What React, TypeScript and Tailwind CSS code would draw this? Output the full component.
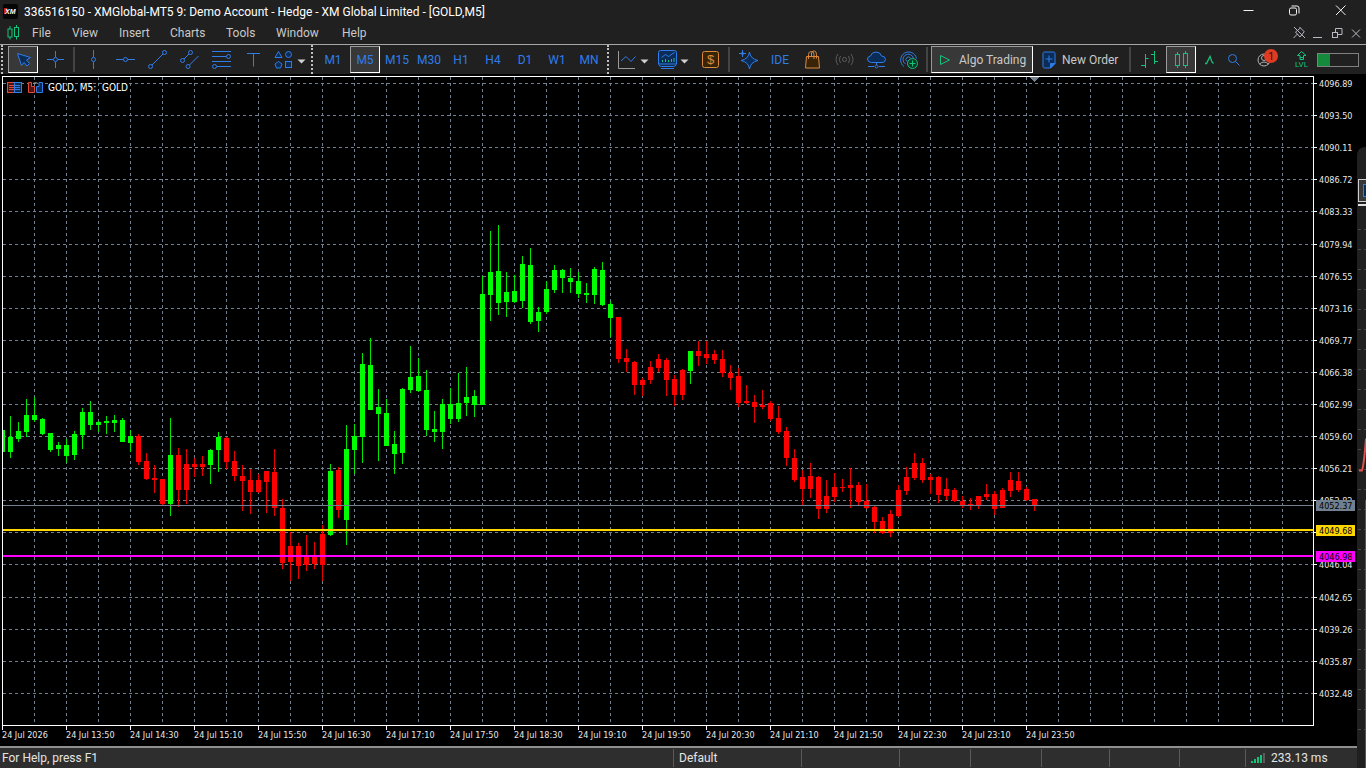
import type { ReactNode } from 'react'

type Candle = [high: number, top: number, bottom: number, low: number, up: 0 | 1]

// screen rows of every M5 candle, 8px apart: wick top, body top, body bottom, wick bottom, colour
const CANDLES: Candle[] = [
  [430, 430, 452, 452, 1], [416, 437, 452, 458, 1], [422, 431, 439, 442, 1], [399, 415, 432, 437, 1], [397, 415, 420, 422, 1],
  [418, 419, 434, 435, 1], [433, 433, 450, 452, 1], [442, 445, 449, 456, 1], [439, 445, 456, 463, 1], [431, 434, 455, 460, 1],
  [408, 412, 435, 449, 1], [401, 412, 425, 430, 1], [421, 422, 425, 432, 1], [416, 421, 423, 434, 1], [415, 420, 423, 432, 1],
  [418, 420, 442, 442, 1], [430, 436, 443, 452, 1], [434, 436, 462, 465, 0], [453, 461, 479, 480, 0], [465, 478, 480, 493, 0],
  [479, 479, 504, 505, 0], [418, 455, 504, 516, 1], [448, 455, 490, 507, 0], [449, 464, 490, 504, 0], [458, 464, 467, 477, 0],
  [456, 464, 467, 476, 0], [449, 450, 465, 484, 1], [432, 437, 450, 472, 1], [437, 438, 462, 469, 0], [451, 461, 476, 481, 0],
  [465, 476, 481, 511, 0], [469, 480, 492, 514, 0], [474, 480, 492, 493, 0], [471, 471, 482, 513, 0], [449, 472, 508, 516, 0],
  [499, 508, 563, 569, 0], [532, 546, 562, 581, 0], [543, 546, 566, 579, 0], [535, 556, 565, 571, 0], [542, 556, 564, 569, 0],
  [525, 534, 565, 581, 0], [464, 471, 535, 536, 1], [467, 470, 510, 518, 0], [425, 449, 520, 545, 1], [424, 436, 450, 474, 1],
  [353, 364, 437, 463, 1], [338, 365, 410, 410, 1], [389, 407, 414, 461, 1], [399, 413, 446, 446, 1], [431, 444, 454, 474, 1],
  [388, 389, 453, 464, 1], [346, 377, 390, 393, 1], [358, 376, 391, 392, 1], [370, 390, 430, 436, 1], [411, 429, 432, 442, 1],
  [399, 404, 432, 449, 1], [388, 404, 419, 424, 1], [373, 403, 419, 422, 1], [367, 397, 403, 416, 1], [390, 396, 405, 417, 1],
  [276, 294, 405, 405, 1], [231, 272, 295, 321, 1], [225, 271, 303, 315, 1], [272, 292, 302, 317, 1], [275, 291, 302, 303, 1],
  [256, 264, 301, 308, 1], [248, 265, 322, 324, 1], [307, 312, 321, 332, 1], [281, 289, 312, 314, 1], [265, 270, 290, 293, 1],
  [269, 270, 278, 293, 1], [268, 278, 282, 293, 1], [272, 281, 294, 298, 1], [283, 293, 295, 303, 1], [267, 269, 295, 304, 1],
  [262, 270, 305, 306, 1], [301, 304, 318, 337, 1], [317, 317, 359, 363, 0], [349, 358, 362, 372, 0], [361, 362, 385, 395, 0],
  [378, 380, 385, 396, 0], [361, 367, 380, 384, 0], [354, 359, 368, 372, 0], [358, 360, 380, 396, 0], [375, 379, 395, 406, 0],
  [369, 370, 395, 400, 0], [351, 351, 371, 384, 1], [341, 351, 356, 366, 0], [341, 354, 358, 364, 0], [350, 354, 360, 364, 0],
  [350, 359, 373, 377, 0], [365, 373, 378, 390, 0], [368, 376, 403, 407, 0], [385, 401, 403, 404, 0], [395, 402, 407, 423, 0],
  [390, 405, 407, 409, 0], [401, 403, 419, 421, 0], [406, 418, 432, 434, 0], [427, 431, 458, 466, 0], [449, 458, 480, 482, 0],
  [470, 477, 489, 506, 0], [463, 476, 489, 498, 0], [476, 477, 509, 519, 0], [480, 496, 509, 513, 0], [473, 487, 497, 502, 0],
  [479, 487, 488, 492, 0], [468, 485, 488, 508, 0], [482, 485, 502, 506, 0], [484, 501, 508, 509, 0], [506, 507, 522, 533, 0],
  [517, 521, 533, 534, 0], [510, 514, 533, 537, 0], [485, 490, 516, 517, 0], [467, 477, 491, 495, 0], [453, 463, 478, 480, 0],
  [458, 463, 480, 483, 0], [474, 477, 480, 494, 0], [476, 477, 495, 503, 0], [478, 489, 496, 500, 0], [488, 490, 501, 502, 0],
  [496, 501, 505, 508, 0], [498, 504, 506, 510, 0], [496, 496, 506, 509, 0], [484, 494, 497, 500, 0], [491, 494, 509, 515, 0],
  [488, 490, 508, 508, 0], [472, 480, 491, 497, 0], [472, 481, 490, 492, 0], [487, 489, 500, 501, 0], [499, 499, 506, 511, 0],
]

const TOP = 77

const PRICES: [string, number][] = [
  ['4096.89', 83], ['4093.50', 115], ['4090.11', 147], ['4086.72', 179], ['4083.33', 211],
  ['4079.94', 244], ['4076.55', 276], ['4073.16', 308], ['4069.77', 340], ['4066.38', 372],
  ['4062.99', 404], ['4059.60', 436], ['4056.21', 468], ['4052.82', 500], ['4049.43', 532],
  ['4046.04', 564], ['4042.65', 597], ['4039.26', 629], ['4035.87', 661], ['4032.48', 693],
]

const TAGS = [
  { price: '4052.37', y: 505, fill: '#708090' },
  { price: '4049.68', y: 530, fill: '#ffd700' },
  { price: '4046.98', y: 556, fill: '#ff00ff' },
]

const TIMES = [
  '24 Jul 2026', '24 Jul 13:50', '24 Jul 14:30', '24 Jul 15:10', '24 Jul 15:50', '24 Jul 16:30',
  '24 Jul 17:10', '24 Jul 17:50', '24 Jul 18:30', '24 Jul 19:10', '24 Jul 19:50', '24 Jul 20:30',
  '24 Jul 21:10', '24 Jul 21:50', '24 Jul 22:30', '24 Jul 23:10', '24 Jul 23:50',
]

const GRID_COLUMNS = Array.from({ length: 40 }, (_, i) => 31 + i * 32)

const CHART_FONT = "font-['DejaVu_Sans_Condensed','DejaVu_Sans',sans-serif] text-[9px]"

const BLUE = '#2f7de9'
const NAVY = '#0a2c57'
const GREEN = '#14c27c'
const ORANGE = '#d98a3d'

export default function App() {
  return (
    <div className="h-screen flex flex-col overflow-hidden bg-black font-['Roboto','Open_Sans',sans-serif] text-[12px] text-[#e4e4e4]">
      <TitleBar />
      <MenuBar />
      <Toolbar />
      <div className="flex-1 min-h-0 flex">
        <main className="flex-1 min-w-0 flex flex-col">
          <Chart />
          <StatusBar />
        </main>
        <SidePanel />
      </div>
    </div>
  )
}

function TitleBar() {
  return (
    <header className="h-[23px] shrink-0 bg-[#202020] flex items-center pl-[3px] pr-[17px]">
      <svg width="15" height="15" viewBox="0 0 15 15" aria-hidden="true">
        <rect width="15" height="15" rx="2" fill="#050505" />
        <path d="M1 4h3l1 2-3 4H1z" fill="#c8201c" />
        <text x="2" y="10" fill="#fff" fontSize="7" fontWeight="700" fontStyle="italic" fontFamily="Liberation Sans, sans-serif">XM</text>
      </svg>
      <h1 className="pl-1.5 text-white whitespace-nowrap">
        336516150 - XMGlobal-MT5 9: Demo Account - Hedge - XM Global Limited - [GOLD,M5]
      </h1>
      <div className="ml-auto flex">
        <WindowButton label="Minimize">
          <path d="M3.500 7.500h10" />
        </WindowButton>
        <span className="w-[29px]" />
        <WindowButton label="Restore">
          <rect x="3.500" y="5" width="7" height="7" rx="1.500" />
          <path d="M5.500 3h5.500a2 2 0 0 1 2 2v5.500" />
        </WindowButton>
        <span className="w-[29px]" />
        <WindowButton label="Close">
          <path d="M4 2.500l9.500 9.500M13.500 2.500l-9.500 9.500" />
        </WindowButton>
      </div>
    </header>
  )
}

function WindowButton({ label, children }: { label: string; children: ReactNode }) {
  return (
    <button type="button" aria-label={label} className="w-[17px] h-[17px]">
      <svg width="17" height="17" viewBox="0 0 17 17" fill="none" stroke="#f2f2f2">
        {children}
      </svg>
    </button>
  )
}

const MENU = [
  { label: 'File', className: 'w-10' },
  { label: 'View', className: 'w-[47px]' },
  { label: 'Insert', className: 'w-[51px]' },
  { label: 'Charts', className: 'w-14' },
  { label: 'Tools', className: 'w-[50px]' },
  { label: 'Window', className: 'w-[66px]' },
  { label: 'Help', className: 'w-10' },
]

function MenuBar() {
  return (
    <div className="h-[21px] shrink-0 bg-[#202020] flex items-center pl-1.5 pr-[3px] pb-0.5">
      <svg width="14" height="17" viewBox="0 0 14 17" fill="none" stroke={GREEN} aria-hidden="true">
        <path d="M4 2v3M4 13v2.500M10.500 1v2.500M10.500 12.500v3" />
        <rect x="2" y="5" width="4" height="8" />
        <rect x="8.500" y="3.500" width="4" height="9" />
      </svg>
      <nav className="flex pl-3 text-[#c9c9c9]">
        {MENU.map((item) => (
          <button key={item.label} type="button" className={`text-left ${item.className}`}>
            {item.label}
          </button>
        ))}
      </nav>
      <div className="ml-auto flex gap-[5px] text-[#b9b9c4]">
        <button type="button" aria-label="Unpin">
          <svg width="14" height="17" viewBox="0 0 14 17" fill="none" stroke="currentColor">
            <path d="M2 3l11 11M1.500 14l4-4M7.500 3l5 5M8.500 4l-5 4 4.500 5 4-5" />
          </svg>
        </button>
        <button type="button" aria-label="Minimize chart">
          <svg width="14" height="17" viewBox="0 0 14 17" fill="none" stroke="currentColor">
            <path d="M2 13.500h9" />
          </svg>
        </button>
        <button type="button" aria-label="Restore chart">
          <svg width="14" height="17" viewBox="0 0 14 17" fill="none" stroke="currentColor">
            <rect x="2.500" y="8.500" width="5" height="5" />
            <path d="M5.500 8V4.500h6.500v6h-4" />
          </svg>
        </button>
        <button type="button" aria-label="Close chart">
          <svg width="14" height="17" viewBox="0 0 14 17" fill="none" stroke="currentColor">
            <path d="M3 5.500l8 8M11 5.500l-8 8" />
          </svg>
        </button>
      </div>
    </div>
  )
}

function Icon({ label, children, className = 'w-8' }: { label: string; children: ReactNode; className?: string }) {
  return (
    <button type="button" aria-label={label} className={`h-[27px] shrink-0 flex justify-center ${className}`}>
      <svg width="32" height="27" viewBox="0 0 32 27" fill="none" stroke={BLUE} className="shrink-0">
        {children}
      </svg>
    </button>
  )
}

function MenuIcon({ label, children }: { label: string; children: ReactNode }) {
  return (
    <button type="button" aria-label={label} className="w-10 h-[27px] shrink-0">
      <svg width="40" height="27" viewBox="0 0 40 27" fill="none" stroke={BLUE}>
        {children}
        <path d="M28.500 13.500h8l-4 4z" fill="#d0d0d0" stroke="none" />
      </svg>
    </button>
  )
}

function Pressed({ label, children }: { label: string; children: ReactNode }) {
  return (
    <button
      type="button"
      aria-label={label}
      aria-pressed="true"
      className="w-[30px] h-[27px] mx-px shrink-0 flex items-center justify-center bg-[#383838] border border-[#9a9a9a] border-r-white border-b-white text-[#2f7de9]"
    >
      {children}
    </button>
  )
}

function Divider() {
  return <span className="w-0.5 h-[25px] mx-0.5 shrink-0 bg-[#444444]" />
}

function Grip({ className }: { className: string }) {
  return <span className={`h-[29px] shrink-0 border-l-2 border-dotted border-[#c0c0c0] ${className}`} />
}

const PERIODS = ['M1', 'M5', 'M15', 'M30', 'H1', 'H4', 'D1', 'W1', 'MN']

function Toolbar() {
  return (
    <div className="h-[30px] shrink-0 bg-[#202020] border-t border-[#a6a6a6] flex items-center">
      <Grip className="ml-px w-1.5" />
      <Pressed label="Cursor">
        <svg width="28" height="25" viewBox="2 1 28 25" fill={NAVY} stroke={BLUE}>
          <path d="M10.500 7.500l13 4-4 2.500 3 3.500-2.500 2.500-3-3.500-2.500 3z" />
        </svg>
      </Pressed>
      <Icon label="Crosshair">
        <path d="M8 13.500h6M19 13.500h6M16.500 5v6M16.500 16v6" />
        <circle cx="16.500" cy="13.500" r="2" />
      </Icon>
      <Divider />
      <Icon label="Vertical line">
        <path d="M16.500 4v7M16.500 16v7" />
        <circle cx="16.500" cy="13.500" r="2" />
      </Icon>
      <Icon label="Horizontal line">
        <path d="M7 13.500h7M19 13.500h7" />
        <circle cx="16.500" cy="13.500" r="2" />
      </Icon>
      <Icon label="Trendline">
        <path d="M11 19L22 8" />
        <circle cx="9.500" cy="20.500" r="2" />
        <circle cx="23.500" cy="6.500" r="2" />
      </Icon>
      <Icon label="Equidistant channel">
        <path d="M11 13l5-5M16.500 19l9-9" />
        <circle cx="9.500" cy="14.500" r="2" />
        <circle cx="17.500" cy="6.500" r="2" />
        <circle cx="15" cy="20.500" r="2" />
      </Icon>
      <Icon label="Fibonacci retracement">
        <path d="M7 5.500h19M7 10.500h14M7 15.500h19M12 20.500h14" />
        <circle cx="23.500" cy="10.500" r="2" />
        <circle cx="9.500" cy="20.500" r="2" />
      </Icon>
      <Icon label="Text">
        <path d="M10 7.500h13M16.500 7.500v13" />
      </Icon>
      <MenuIcon label="Shapes">
        <path d="M9.500 5.500l-3.500 6h7zM9.500 15.500l3.500 2.500-1.500 4h-4L6 18z" fill={NAVY} />
        <circle cx="19.500" cy="8.500" r="3" fill={NAVY} />
        <rect x="16.500" y="15.500" width="6" height="6" fill={NAVY} />
      </MenuIcon>
      <Grip className="ml-0.5 w-1.5" />
      {PERIODS.map((period) =>
        period === 'M5' ? (
          <Pressed key={period} label={period}>
            {period}
          </Pressed>
        ) : (
          <button key={period} type="button" className="w-8 h-[27px] shrink-0 text-[#2f7de9]">
            {period}
          </button>
        ),
      )}
      <Grip className="ml-0.5 w-[5px]" />
      <MenuIcon label="Line chart">
        <path d="M6.500 5v17.500H23" stroke="#9a9a9a" />
        <path d="M9 15l5-4.500 5 5 4.500-5" />
      </MenuIcon>
      <MenuIcon label="Templates">
        <path d="M8.500 4.500h14a2 2 0 0 1 2 2v11.500h-18V6.500a2 2 0 0 1 2-2zM6.500 18.500q1 2 3 2h12q2 0 3-2M9 22.500h13" fill={NAVY} />
        <path d="M9.500 11.500l4-3 3 2 6-4" />
        <path d="M10.500 14v2M13.500 13v3M16.500 14v2M19.500 13v3M22 12v4" stroke={GREEN} />
      </MenuIcon>
      <button type="button" aria-label="Trade" className="w-[34px] h-[27px] pl-0.5 shrink-0">
        <svg width="32" height="27" viewBox="0 0 32 27">
          <rect x="8.500" y="5.500" width="16" height="16" rx="2" fill="#3a2408" stroke={ORANGE} />
          <text x="16.500" y="18" textAnchor="middle" fill={ORANGE} fontSize="13" fontFamily="Liberation Sans, sans-serif">$</text>
        </svg>
      </button>
      <Divider />
      <Icon label="Assistant">
        <path d="M17.500 6q1 7 8.500 8.500-7.500 1.500-8.500 8.500-1-7-8.500-8.500 7.500-1.500 8.500-8.500z" fill={NAVY} />
        <path d="M10.500 4v7M7 7.500h7M9.500 6.500l2 2M11.500 6.500l-2 2" />
      </Icon>
      <button type="button" className="w-8 h-[27px] shrink-0 text-[#2f7de9]">IDE</button>
      <Icon label="Market">
        <path d="M10.500 10.500h12l1 11.500h-14z" fill="#3a2408" stroke={ORANGE} />
        <path d="M12.500 13V8.500q0-3 3-3 2.500 0 2.500 3V13M15.500 10V7q1-2.500 3-2 2 .5 2 3.500v4" stroke={ORANGE} />
      </Icon>
      <Icon label="Signals">
        <g stroke="#5c5c5c">
          <circle cx="16.500" cy="13.500" r="2" />
          <path d="M12.500 10q-2.500 3.500 0 7M20.500 10q2.500 3.500 0 7M10 8q-4 5.500 0 11M23 8q4 5.500 0 11" />
        </g>
      </Icon>
      <Icon label="Virtual hosting">
        <path d="M11.500 16.500q-4 0-4-3.500 0-2.500 3-3 1-4 5.500-4t5.500 4q4 0 4 3.500 0 3-3.500 3z" fill={NAVY} />
        <path d="M16.500 17v2M8 20.500h6M19 20.500h6" />
        <circle cx="16.500" cy="20.500" r="1.500" />
      </Icon>
      <Icon label="Copy trading">
        <path d="M12 20.500a8 8 0 1 1 12.500-8M13.500 18a5.300 5.300 0 1 1 8-5.500M15 15.500a2.500 2.500 0 1 1 3.500-3.500" />
        <circle cx="20.500" cy="17.500" r="5" fill="#0c3a28" stroke={GREEN} />
        <path d="M17.500 17.500h6M20.500 14.500v6" stroke={GREEN} />
      </Icon>
      <Divider />
      <button
        type="button"
        aria-pressed="true"
        className="w-[102px] h-[27px] ml-px shrink-0 flex items-center pl-[7px] gap-2 bg-[#383838] border border-[#9a9a9a] border-r-white border-b-white whitespace-nowrap text-[#c9c9c9]"
      >
        <svg width="12" height="12" viewBox="0 0 12 12" fill="none" stroke={GREEN} className="shrink-0">
          <path d="M1.500 1.500v9l9-4.500z" />
        </svg>
        Algo Trading
      </button>
      <button type="button" className="w-[94px] h-[27px] shrink-0 flex items-center pl-[9px] gap-1.5 whitespace-nowrap text-[#c9c9c9]">
        <svg width="14" height="18" viewBox="0 0 14 18" fill={NAVY} stroke={BLUE} className="shrink-0">
          <path d="M2.500 1h9a1.500 1.500 0 0 1 1.500 1.500v10L8.500 17h-6A1.500 1.500 0 0 1 1 15.500v-13A1.500 1.500 0 0 1 2.500 1z" />
          <path d="M13 12.500H8.500V17z" fill={BLUE} />
          <path d="M3.500 8h7M7 4.500v7" />
        </svg>
        New Order
      </button>
      <Divider />
      <Icon label="Bar chart">
        <path d="M12.500 8v14M8 19.500h4.500M12.500 12.500h3M21.500 5v13M18 8.500h3.500M21.500 15.500h3.500" stroke={GREEN} />
      </Icon>
      <Pressed label="Candlesticks">
        <svg width="28" height="25" viewBox="2 1 28 25" fill="none" stroke={GREEN}>
          <rect x="10.500" y="8.500" width="4" height="11" />
          <rect x="18.500" y="7.500" width="4" height="12" />
          <path d="M12.500 6v2.500M12.500 19.500V22M20.500 5v2.500M20.500 19.500V22" />
        </svg>
      </Pressed>
      <Icon label="Line" className="w-6">
        <path d="M12 17.500h1.500l3.500-7 2 5.500 1.500 1.500" stroke={GREEN} strokeWidth="1.300" />
      </Icon>
      <Icon label="Search" className="w-6">
        <circle cx="15.500" cy="12.500" r="4" />
        <path d="M18.500 15.500l4 4" />
      </Icon>
      <Icon label="Account, 1 notification" className="w-10">
        <g stroke="#b0b0b0">
          <circle cx="15" cy="14" r="6" />
          <circle cx="15" cy="12" r="2.500" />
          <path d="M10.500 18q4.500-4 9 0" />
        </g>
        <circle cx="22" cy="10" r="7" fill="#df3b22" stroke="none" />
        <text x="22" y="14" textAnchor="middle" fill="#1c1c1c" stroke="none" fontSize="11">1</text>
      </Icon>
      <Icon label="Level">
        <path d="M16.500 5.500L12.500 9.500h2.500v4h3.500v-4H21zM15 11.500h3.500" stroke={GREEN} />
        <text x="16.500" y="21" textAnchor="middle" fill={GREEN} stroke="none" fontSize="8">LVL</text>
      </Icon>
      <div className="w-[42px] h-3.5 shrink-0 border border-[#808080]">
        <div className="w-3 h-full bg-[#168a3c]" />
      </div>
    </div>
  )
}

function Chart() {
  return (
    <section className="flex-1 min-h-0 flex flex-col pt-0.5" aria-label="GOLD, M5">
      <div className="flex-1 min-h-0 flex">
        <Plot />
        <PriceAxis />
      </div>
      <svg className={`w-full h-5 shrink-0 ${CHART_FONT}`} shapeRendering="crispEdges">
        {TIMES.map((time, i) => (
          <g key={time}>
            <rect x={2 + i * 64} y={0} width={1} height={4} fill="#fff" />
            <text x={2 + i * 64} y={12} fill="#e8e8e8">{time}</text>
          </g>
        ))}
      </svg>
    </section>
  )
}

function Plot() {
  return (
    <div className="flex-1 min-w-0 ml-0.5 border border-white">
      <svg className={`block w-full h-full ${CHART_FONT}`} shapeRendering="crispEdges">
        <g stroke="#708090" strokeDasharray="3 3">
          {GRID_COLUMNS.map((x) => (
            <line key={x} x1={x + 0.5} x2={x + 0.5} y1={0} y2="100%" />
          ))}
          {PRICES.map(([price, y]) => (
            <line key={price} x1={0} x2="100%" y1={y - TOP + 0.5} y2={y - TOP + 0.5} />
          ))}
        </g>
        {CANDLES.map(([high, top, bottom, low, up], i) => (
          <g key={i} fill={up ? '#00ff00' : '#ff0000'}>
            <rect x={i * 8 - 1} y={high - TOP} width={1} height={low - high} fill={up ? '#00e600' : '#e60000'} />
            <rect x={i * 8 - 3} y={top - TOP} width={5} height={bottom - top} />
          </g>
        ))}
        <rect x={0} y={505 - TOP} width="100%" height={1} fill="#708090" />
        <rect x={0} y={529 - TOP} width="100%" height={2} fill="#ffd700" />
        <rect x={0} y={555 - TOP} width="100%" height={2} fill="#ff00ff" />
        <path d="M1027 0h9l-4.500 5z" fill="#708090" />

        <g fill="none" shapeRendering="auto">
          <rect x="4.500" y="5.500" width="7" height="10" fill="#4a1512" stroke="#e04a3a" />
          <rect x="11.500" y="5.500" width="7" height="10" fill={NAVY} stroke={BLUE} />
          <path d="M6 8.500h5M6 10.500h5M6 12.500h5" stroke="#e04a3a" />
          <path d="M12 8.500h5M12 10.500h5M12 12.500h5" stroke={BLUE} />
          <path d="M25.500 5.500h3v4h3v6h-6z" fill="#4a1512" stroke="#e04a3a" />
          <path d="M36 5.500h3.500v10h-6v-6H36z" fill={NAVY} stroke={BLUE} />
          <path d="M30 6.500q2.500-2 5 0" stroke="#9a9a9a" />
        </g>
        <text x={45} y={14} fill="#fff" className="text-[10px] whitespace-pre">{'GOLD, M5:  GOLD'}</text>
      </svg>
    </div>
  )
}

function PriceAxis() {
  return (
    <svg className={`w-[43px] h-full shrink-0 ${CHART_FONT}`} shapeRendering="crispEdges">
      {PRICES.map(([price, y]) => (
        <g key={price}>
          <rect x={0} y={y - 76} width={3} height={1} fill="#fff" />
          <text x={5} y={y - 72} fill="#e8e8e8">{price}</text>
        </g>
      ))}
      {TAGS.map((tag) => (
        <g key={tag.price}>
          <rect x={2} y={tag.y - 81} width={39} height={11} fill={tag.fill} />
          <text x={5} y={tag.y - 72} fill="#000">{tag.price}</text>
        </g>
      ))}
    </svg>
  )
}

function StatusBar() {
  return (
    <footer className="h-[22px] shrink-0 flex items-center border-t-2 border-[#8f8f8f] bg-[#2e2e2e] whitespace-nowrap">
      <span className="flex-1 pl-0.5">For Help, press F1</span>
      <span className="w-32 border-l border-[#5a5a5a] pl-[5px]">Default</span>
      <span className="w-[98px] h-[18px] border-l border-[#5a5a5a]" />
      <span className="w-[71px] h-[18px] border-l border-[#5a5a5a]" />
      <span className="w-[71px] h-[18px] border-l border-[#5a5a5a]" />
      <span className="w-[68px] h-[18px] border-l border-[#5a5a5a]" />
      <span className="w-[70px] h-[18px] border-l border-[#5a5a5a]" />
      <span className="w-[66px] h-[18px] border-l border-[#5a5a5a]" />
      <span className="w-[112px] border-l border-[#5a5a5a] pl-[5px] flex items-center gap-1.5">
        <svg width="14" height="12" viewBox="0 0 14 12" fill={GREEN} shapeRendering="crispEdges" aria-hidden="true">
          <path d="M0 9h2v2H0zM3 7h2v4H3zM6 5h2v6H6zM9 3h2v8H9z" />
          <path d="M12 1h2v10h-2z" fill="#5a5a5a" />
        </svg>
        233.13 ms
      </span>
    </footer>
  )
}

const PANEL_TICKS = Array.from({ length: 26 }, (_, i) => 81 + i * 20)

// edge of the neighbouring window
function SidePanel() {
  return (
    <aside className="w-[9px] shrink-0 pt-[73px]">
      <svg className="block w-full h-full bg-[#202020] rounded-tl-lg" shapeRendering="crispEdges">
        <rect x={1.5} y={32.5} width={20} height={22} fill="#383838" stroke="#d0d0d0" />
        <rect x={6.5} y={37.5} width={10} height={12} fill={NAVY} stroke={BLUE} />
        <rect x={1} y={57} width={8} height={2} fill="#e0e0e0" />
        {PANEL_TICKS.map((y) => (
          <path key={y} d={`M1 ${y + 1}.5h3M7 ${y + 1}.5h2`} stroke="#4a4a4a" />
        ))}
        <path d="M2 323.500h3q2-6 4-32" fill="none" stroke="#e05050" strokeWidth={2} shapeRendering="auto" />
        <rect x={8} y={353} width={1} height="100%" fill="#1560d0" />
      </svg>
    </aside>
  )
}
